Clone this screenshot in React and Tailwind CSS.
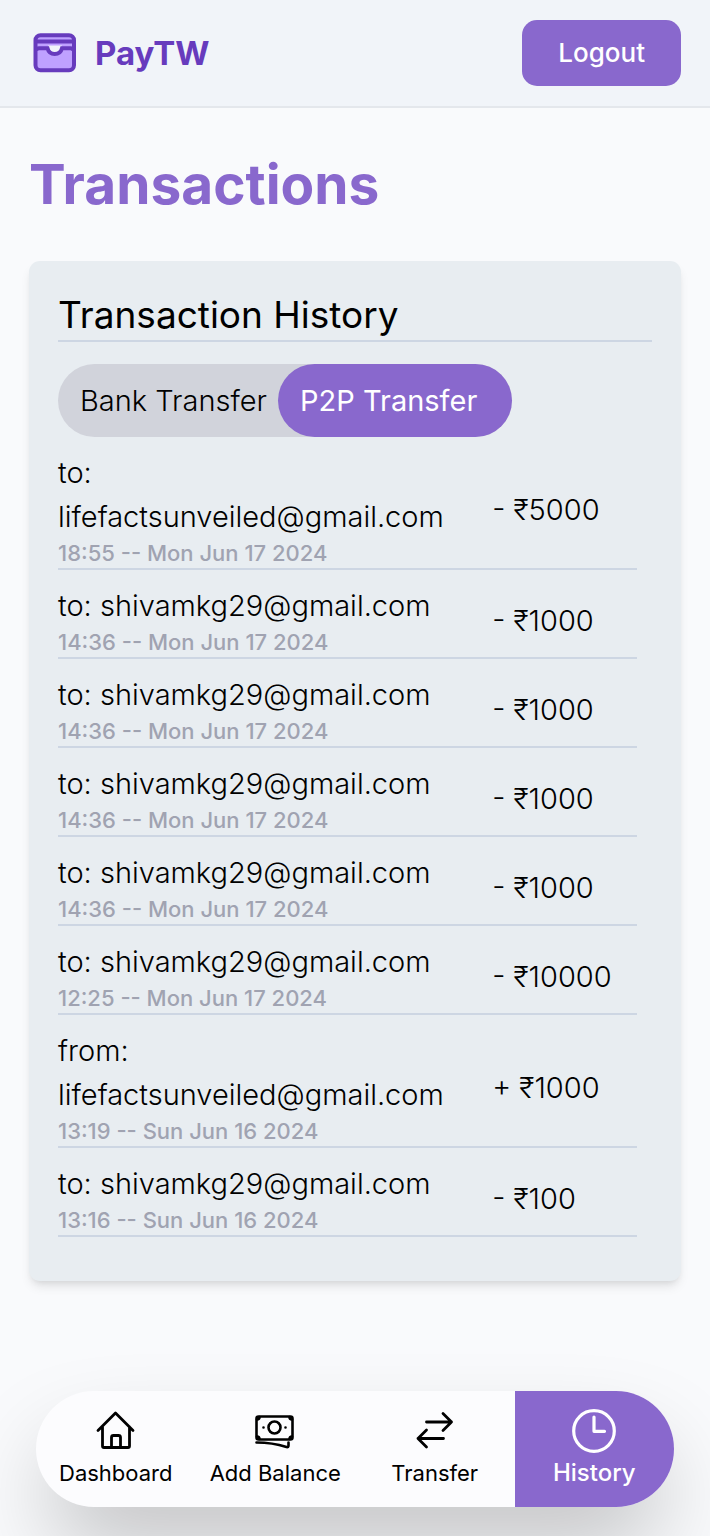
const transactions = [
  { party: "to: lifefactsunveiled@gmail.com", when: "18:55 -- Mon Jun 17 2024", amount: "- ₹5000" },
  { party: "to: shivamkg29@gmail.com", when: "14:36 -- Mon Jun 17 2024", amount: "- ₹1000" },
  { party: "to: shivamkg29@gmail.com", when: "14:36 -- Mon Jun 17 2024", amount: "- ₹1000" },
  { party: "to: shivamkg29@gmail.com", when: "14:36 -- Mon Jun 17 2024", amount: "- ₹1000" },
  { party: "to: shivamkg29@gmail.com", when: "14:36 -- Mon Jun 17 2024", amount: "- ₹1000" },
  { party: "to: shivamkg29@gmail.com", when: "12:25 -- Mon Jun 17 2024", amount: "- ₹10000" },
  { party: "from: lifefactsunveiled@gmail.com", when: "13:19 -- Sun Jun 16 2024", amount: "+ ₹1000" },
  { party: "to: shivamkg29@gmail.com", when: "13:16 -- Sun Jun 16 2024", amount: "- ₹100" },
];

function WalletLogo() {
  return (
    <svg viewBox="0 0 44 40" className="h-10 w-11" fill="none" aria-hidden="true">
      <rect x="2.5" y="2.2" width="38.5" height="35" rx="5" fill="#bfa1ff" />
      <path d="M15 12.5H29C27.5 18 25 20 22 20S16.5 18 15 12.5Z" fill="#f1f4fa" />
      <path d="M3 8.400H41" stroke="#673bbd" strokeWidth="4" />
      <path d="M3 17.500Q3.500 15.200 6 15.200H14.500C15.500 19 18 21 21.700 21S28 19 29 15.200H37.500Q40 15.200 40.500 17.500" stroke="#673bbd" strokeWidth="4" />
      <rect x="2.500" y="2.200" width="38.500" height="35" rx="5" stroke="#673bbd" strokeWidth="4" />
    </svg>
  );
}

function HomeIcon() {
  return (
    <svg viewBox="0 0 44 44" className="size-11" fill="none" stroke="currentColor" strokeWidth="2.800" strokeLinecap="round" strokeLinejoin="round" aria-hidden="true">
      <path d="M4 21.500 21.500 4 39 21.500M8.500 18V37A1.500 1.500 0 0 0 10 38.500H34A1.500 1.500 0 0 0 35.500 37V18M17.500 38V28.500A2 2 0 0 1 19.500 26.500H24.500A2 2 0 0 1 26.500 28.500V38" />
    </svg>
  );
}

function CashIcon() {
  return (
    <svg viewBox="0 0 44 44" className="size-11" fill="none" stroke="currentColor" strokeWidth="2.600" strokeLinecap="round" strokeLinejoin="round" aria-hidden="true">
      <rect x="3.500" y="7.500" width="36" height="23" rx="2" />
      <circle cx="21.500" cy="18.500" r="6" />
      <path d="M3.500 33.500C14 33.500 24 35 33.500 38Q35.500 38.500 35.500 36.500V33.500M10.500 18.500H10.510M32.500 18.500H32.510M4 10.500Q6.500 10.500 6.500 8M39 10.500Q36.500 10.500 36.500 8M4 27.500Q6.500 27.500 6.500 30M39 27.500Q36.500 27.500 36.500 30" />
    </svg>
  );
}

function TransferIcon() {
  return (
    <svg viewBox="0 0 44 44" className="size-11" fill="none" stroke="currentColor" strokeWidth="2.800" strokeLinecap="round" strokeLinejoin="round" aria-hidden="true">
      <path d="M13.500 13H38.500M30 4.500 38.500 13 30 21.500M30.500 29.500H5M13.500 21 5 29.500 13.500 38" />
    </svg>
  );
}

function ClockIcon() {
  return (
    <svg viewBox="0 0 44 44" className="size-11" fill="none" stroke="currentColor" strokeWidth="3.200" strokeLinecap="round" strokeLinejoin="round" aria-hidden="true">
      <circle cx="22" cy="22" r="20.300" />
      <path d="M22 8V22.300H32.500" />
    </svg>
  );
}

const links = [
  { label: "Dashboard", icon: HomeIcon },
  { label: "Add Balance", icon: CashIcon },
  { label: "Transfer", icon: TransferIcon },
  { label: "History", icon: ClockIcon, active: true },
];

export default function App() {
  return (
    <div className="flex min-h-screen flex-col bg-[#f9fafc] font-['Inter',sans-serif] text-black [font-optical-sizing:none]">
      <header className="flex items-center justify-between border-b-2 border-[#e4e7ec] bg-[#f1f4f9] px-[29px] py-5">
        <a href="#" className="flex items-center gap-[18px] pl-1">
          <WalletLogo />
          <span className="text-[33px] leading-10 font-bold text-[#673bbd]">PayTW</span>
        </a>
        <button type="button" className="rounded-[15px] bg-[#8968cd] px-9 py-3 text-[26px] leading-[42px] font-medium text-white">
          Logout
        </button>
      </header>

      <main className="px-[29px] pt-[43px]">
        <h1 className="text-[55px] leading-[66px] font-bold text-[#8968cd]">Transactions</h1>

        <section className="mt-11 rounded-[11px] bg-[#e8edf1] px-[29px] pt-7 pb-11 shadow-[0_7px_11px_-2px_rgba(0,0,0,0.1),0_4px_7px_-4px_rgba(0,0,0,0.1)]">
          <h2 className="border-b-2 border-[#cdd6e3] text-[37px] leading-[51px] font-normal">Transaction History</h2>

          <div className="mt-[22px] inline-flex rounded-full bg-[#d1d3db] align-top text-[29px] leading-[45px]">
            <button type="button" className="py-[14px] pr-[11px] pl-[22px] font-light">Bank Transfer</button>
            <button type="button" className="rounded-full bg-[#8968cd] py-[14px] pr-[35px] pl-[22px] text-white">P2P Transfer</button>
          </div>

          <ul className="mr-[15px]">
            {transactions.map((t, i) => (
              <li key={i} className="grid grid-cols-4 items-center border-b-2 border-[#cdd6e3] pt-[14px] font-light">
                <div className="col-span-3 pr-4">
                  <p className="text-[29px] leading-[44px]">{t.party}</p>
                  <p className="text-[22px] leading-[29px] font-medium text-[#a0a3b1]">{t.when}</p>
                </div>
                <p className="text-[29px] leading-[44px] whitespace-nowrap">{t.amount}</p>
              </li>
            ))}
          </ul>
        </section>
      </main>

      <nav className="sticky bottom-[29px] mx-9 mt-auto mb-[29px] grid grid-cols-4 overflow-hidden rounded-full bg-[#fcfcfe] shadow-[0_45px_90px_-12px_rgba(0,0,0,0.25)]">
        {links.map(({ label, icon: Icon, active }) => (
          <a
            key={label}
            href="#"
            className={
              active
                ? "flex flex-col items-center gap-[2px] bg-[#8968cd] pt-[18px] pb-4 text-[24px] leading-9 font-medium text-white"
                : "flex flex-col items-center gap-[2px] pt-[18px] pb-4 text-[22px] leading-9 text-black"
            }
          >
            <Icon />
            <span className="whitespace-nowrap">{label}</span>
          </a>
        ))}
      </nav>
    </div>
  );
}
